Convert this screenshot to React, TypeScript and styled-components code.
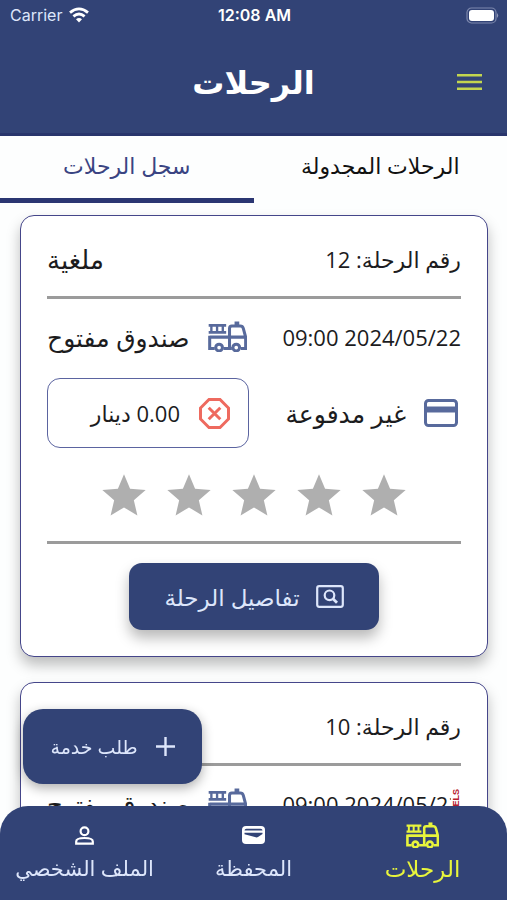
import React from "react";
import styled, { createGlobalStyle } from "styled-components";

const navy = "#324376";
const ink = "#1c1c1e";
const slate = "#586a9c";
const pale = "#dde6fb";
const lime = "#e8f53c";

const GlobalStyle = createGlobalStyle`
  *, *::before, *::after { box-sizing: border-box; }
  html, body, #root { height: 100%; }
  body {
    margin: 0;
    background: #fdfefe;
    color: ${ink};
    font-family: "Open Sans", "DejaVu Sans", sans-serif;
  }
  button { font: inherit; color: inherit; border: 0; background: none; padding: 0; cursor: pointer; }
  h1, h2, p { margin: 0; font-weight: 400; }
  svg { display: block; flex: none; }
`;

const Page = styled.div`
  height: 100vh;
  display: flex;
  flex-direction: column;
  overflow: hidden;
`;

const Header = styled.header`
  flex: none;
  background: ${navy};
  border-bottom: 3px solid #29356c;
  color: #fff;
`;

const StatusBar = styled.div`
  direction: ltr;
  display: grid;
  grid-template-columns: 1fr auto 1fr;
  align-items: center;
  height: 30px;
  padding: 0 8px 0 10px;
  font: 500 16px "Inter", sans-serif;
`;

const Carrier = styled.span`
  display: flex;
  align-items: center;
  gap: 7px;
  font-weight: 400;
  color: ${pale};
`;

const Clock = styled.time`
  font-weight: 600;
`;

const Battery = styled.span`
  justify-self: end;
`;

const TitleBar = styled.div`
  display: grid;
  grid-template-columns: 1fr auto 1fr;
  align-items: center;
  height: 103px;
  padding: 0 25px;
`;

const Title = styled.h1`
  font-size: 32px;
  line-height: 44px;
  font-weight: 700;
`;

const MenuButton = styled.button`
  justify-self: start;
`;

const Tabs = styled.div`
  display: grid;
  grid-template-columns: 1fr 1fr;
  flex: none;
`;

const Tab = styled.button<{ $active?: boolean }>`
  height: 67px;
  padding-bottom: 4px;
  font-size: 22px;
  border-bottom: 5px solid ${(p) => (p.$active ? "#2b3672" : "transparent")};
  color: ${(p) => (p.$active ? "#3a4482" : "#111")};
`;

const TripList = styled.main`
  flex: 1;
  min-height: 0;
  overflow-y: auto;
  scrollbar-width: none;
  display: flex;
  flex-direction: column;
  gap: 25px;
  padding: 12px 19px 110px 20px;
`;

const Card = styled.article`
  flex: none;
  background: #fff;
  border: 1px solid #45468a;
  border-radius: 14px;
  padding: 0 26px 26px;
  box-shadow: 0 8px 14px rgba(0, 0, 0, 0.26);
`;

const Row = styled.div`
  display: flex;
  align-items: center;
  justify-content: space-between;
  height: 79px;
  font-size: 22px;
  white-space: nowrap;
`;

const HeadRow = styled(Row)`
  height: 80px;
  padding-top: 6px;
`;

const ServiceRow = styled(Row)`
  padding-bottom: 4px;
`;

const TripNumber = styled.h2`
  font-size: 22px;
`;

const Status = styled.span`
  font-size: 26px;
`;

const Divider = styled.hr`
  height: 3px;
  margin: 0;
  border: 0;
  background: #9b9b9b;
`;

const Labelled = styled.span`
  display: flex;
  align-items: center;
  gap: 18px;
  font-size: 25px;
`;

const PayRow = styled(Row)`
  height: 70px;
`;

const Payment = styled(Labelled)`
  padding-inline-start: 3px;
`;

const Amount = styled.span`
  display: flex;
  align-items: center;
  gap: 19px;
  width: 202px;
  height: 70px;
  padding: 0 18px;
  border: 1px solid #5b64a0;
  border-radius: 13px;
`;

const Stars = styled.div`
  display: flex;
  align-items: center;
  justify-content: center;
  gap: 13px;
  height: 93px;
  padding-top: 2px;
`;

const DetailsButton = styled.button`
  display: flex;
  align-items: center;
  justify-content: center;
  gap: 16px;
  width: 250px;
  height: 67px;
  margin: 19px auto 0;
  border-radius: 13px;
  background: ${navy};
  color: ${pale};
  font-size: 23px;
  box-shadow: 0 8px 14px rgba(0, 0, 0, 0.28);
`;

const DateCell = styled.span`
  position: relative;
`;

const Overflow = styled.span`
  position: absolute;
  top: 0;
  right: 0;
  background: #fff;
  color: #b5202c;
  font: 700 9px/10px "Liberation Sans", sans-serif;
  direction: ltr;
  writing-mode: vertical-rl;
  rotate: 180deg;
`;

const TruckTint = styled.span`
  color: ${slate};
`;

const RequestButton = styled.button`
  position: fixed;
  left: 23px;
  bottom: 116px;
  display: flex;
  align-items: center;
  justify-content: center;
  gap: 18px;
  width: 179px;
  height: 75px;
  border-radius: 20px;
  background: ${navy};
  color: ${pale};
  font-size: 19px;
  box-shadow: 0 4px 12px rgba(0, 0, 0, 0.32);
`;

const BottomNav = styled.nav`
  position: fixed;
  inset: auto 0 0;
  display: grid;
  grid-template-columns: repeat(3, 1fr);
  height: 94px;
  border-radius: 28px 28px 0 0;
  background: ${navy};
`;

const NavItem = styled.a<{ $active?: boolean }>`
  display: flex;
  flex-direction: column;
  align-items: center;
  gap: 2px;
  padding-top: 15px;
  color: ${(p) => (p.$active ? lime : pale)};
  font-size: ${(p) => (p.$active ? 23 : 21)}px;
  line-height: 34px;
  text-decoration: none;
  white-space: nowrap;
`;

const NavIcon = styled.span`
  display: flex;
  align-items: center;
  height: 28px;
`;

const TruckIcon = ({ width = 39 }: { width?: number }) => (
  <svg width={width} viewBox="0 0 116 92" fill="none" stroke="currentColor" strokeWidth="9">
    <path d="M2 13H54M2 34H54" strokeWidth="8" />
    <path d="M10 14V34M27 14V34M44 14V34" strokeWidth="7" />
    <path d="M5 48H112M5 44V82H20M46 82H71M98 82H112V48L105 22Q103 15 96 15H71Q64 15 64 22V82" />
    <path d="M79 7H93" strokeWidth="11" />
    <circle cx="33" cy="79" r="10" />
    <circle cx="84" cy="79" r="10" />
  </svg>
);

const WifiIcon = () => (
  <svg width="20" height="16" viewBox="0 0 20 16" fill="none" stroke="#fff" strokeWidth="2.8">
    <path d="M1 5.6Q10 -1.9 19 5.6" />
    <path d="M4.4 9.4Q10 4.6 15.6 9.4" />
    <path d="M10 15.4L7 12.3Q10 9.8 13 12.3Z" fill="#fff" stroke="none" />
  </svg>
);

const BatteryIcon = () => (
  <svg width="33" height="17" viewBox="0 0 33 17">
    <rect x="1" y="1" width="29" height="15" rx="4.5" fill="none" stroke="#7d88ad" strokeWidth="1.2" />
    <rect x="3" y="3" width="25" height="11" rx="3" fill="#fff" />
    <path d="M31 6Q33.4 8.5 31 11Z" fill="#8e98b8" />
  </svg>
);

const MenuIcon = () => (
  <svg width="25" height="18" viewBox="0 0 25 18" fill="#c3d64f">
    <path d="M0 1H25V3.600H0ZM0 7.700H25V10.300H0ZM0 14.400H25V17H0Z" />
  </svg>
);

const CardIcon = () => (
  <svg width="34" height="28" viewBox="0 0 34 28">
    <rect x="1.500" y="1.500" width="31" height="25" rx="3" fill="none" stroke={slate} strokeWidth="3" />
    <path d="M1 7.500H33V13.500H1Z" fill={slate} />
  </svg>
);

const CancelIcon = () => (
  <svg width="31" height="31" viewBox="0 0 31 31" fill="none" stroke="#ee6a5f" strokeWidth="3">
    <path d="M10 1.500H21L29.500 10V21L21 29.500H10L1.500 21V10Z" />
    <path d="M9.700 9.700L21.300 21.300M21.300 9.700L9.700 21.300" />
  </svg>
);

const StarIcon = () => (
  <svg width="52" height="52" viewBox="0 0 24 24" fill="#afafaf">
    <path d="M12 17.270L18.180 21L16.540 13.970L22 9.240L14.810 8.630L12 2L9.190 8.630L2 9.240L7.460 13.970L5.820 21Z" />
  </svg>
);

const DetailsIcon = () => (
  <svg width="28" height="23" viewBox="0 0 28 23" fill="none" stroke="currentColor" strokeWidth="2.200">
    <rect x="1.200" y="1.200" width="25.600" height="20.600" rx="2" />
    <circle cx="13.500" cy="10.300" r="4.800" />
    <path d="M16.700 13.500L21 17.800" strokeWidth="2.800" />
  </svg>
);

const PlusIcon = () => (
  <svg width="19" height="19" viewBox="0 0 19 19" fill="none" stroke="currentColor" strokeWidth="2.400">
    <path d="M9.500 0V19M0 9.500H19" />
  </svg>
);

const WalletIcon = () => (
  <svg width="23" height="18" viewBox="0 0 23 18">
    <rect width="23" height="18" rx="4" fill="#fff" />
    <path d="M2.500 4.600Q2.500 2.700 4.500 2.700H18.500Q20.500 2.700 20.500 4.600Z" fill={navy} />
    <path d="M2.500 6.700H20.500V8L16 11Q15 11.600 13.800 11.300L2.500 8.300Z" fill={navy} />
  </svg>
);

const PersonIcon = () => (
  <svg width="19" height="19" viewBox="0 0 19 19" fill="none" stroke="#fff" strokeWidth="2.200">
    <circle cx="9.500" cy="5.300" r="3.900" />
    <path d="M1.200 17.700V15.500C1.200 10.800 17.800 10.800 17.800 15.500V17.700Z" />
  </svg>
);

type Trip = { id: number; status: string; date: string; overflow?: boolean };

const trips: Trip[] = [
  { id: 12, status: "ملغية", date: "2024/05/22 09:00" },
  { id: 10, status: "ملغية", date: "2024/05/22 09:00", overflow: true },
];

const TripCard = ({ trip }: { trip: Trip }) => (
  <Card>
    <HeadRow>
      <TripNumber>رقم الرحلة: {trip.id}</TripNumber>
      <Status>{trip.status}</Status>
    </HeadRow>
    <Divider />
    <ServiceRow>
      <DateCell>
        {trip.date}
        {trip.overflow && <Overflow>PIXELS</Overflow>}
      </DateCell>
      <Labelled>
        <TruckTint>
          <TruckIcon />
        </TruckTint>
        صندوق مفتوح
      </Labelled>
    </ServiceRow>
    <PayRow>
      <Payment>
        <CardIcon />
        غير مدفوعة
      </Payment>
      <Amount>
        <CancelIcon />
        <span>0.00 دينار</span>
      </Amount>
    </PayRow>
    <Stars role="img" aria-label="0 / 5">
      {[1, 2, 3, 4, 5].map((n) => (
        <StarIcon key={n} />
      ))}
    </Stars>
    <Divider />
    <DetailsButton type="button">
      <DetailsIcon />
      تفاصيل الرحلة
    </DetailsButton>
  </Card>
);

export default function App() {
  return (
    <Page dir="rtl" lang="ar">
      <GlobalStyle />
      <Header>
        <StatusBar>
          <Carrier>
            Carrier
            <WifiIcon />
          </Carrier>
          <Clock>12:08 AM</Clock>
          <Battery>
            <BatteryIcon />
          </Battery>
        </StatusBar>
        <TitleBar>
          <MenuButton type="button" aria-label="القائمة">
            <MenuIcon />
          </MenuButton>
          <Title>الرحلات</Title>
        </TitleBar>
      </Header>
      <Tabs role="tablist">
        <Tab type="button" role="tab" aria-selected={false}>الرحلات المجدولة</Tab>
        <Tab type="button" role="tab" aria-selected $active>سجل الرحلات</Tab>
      </Tabs>
      <TripList>
        {trips.map((trip) => (
          <TripCard key={trip.id} trip={trip} />
        ))}
      </TripList>
      <RequestButton type="button">
        <PlusIcon />
        طلب خدمة
      </RequestButton>
      <BottomNav>
        <NavItem href="#trips" $active aria-current="page">
          <NavIcon><TruckIcon width={33} /></NavIcon>
          الرحلات
        </NavItem>
        <NavItem href="#wallet">
          <NavIcon><WalletIcon /></NavIcon>
          المحفظة
        </NavItem>
        <NavItem href="#profile">
          <NavIcon><PersonIcon /></NavIcon>
          الملف الشخصي
        </NavItem>
      </BottomNav>
    </Page>
  );
}
